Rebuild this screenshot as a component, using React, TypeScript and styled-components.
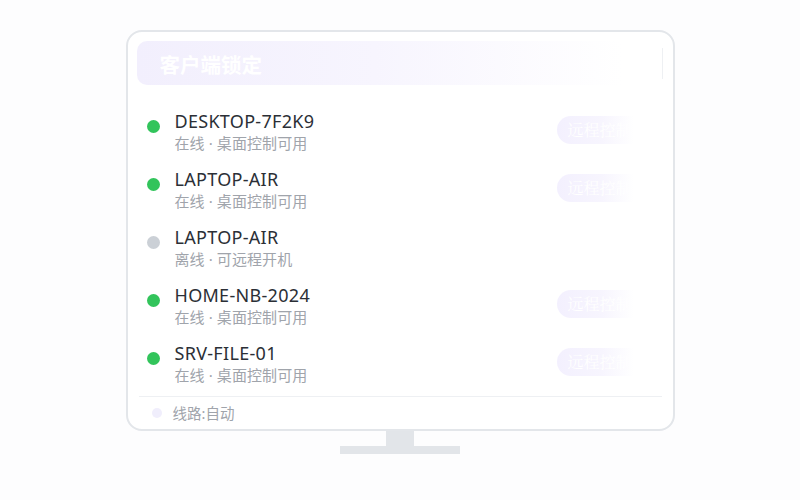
import React from "react";
import styled, { createGlobalStyle } from "styled-components";

const Global = createGlobalStyle`
  html, body { margin: 0; padding: 0; background: #fdfdfe; }
  body { font-family: "Noto Sans", "Noto Sans CJK SC", sans-serif; }
`;

const Page = styled.div`
  width: 800px;
  height: 500px;
  display: flex;
  flex-direction: column;
  align-items: center;
  padding-top: 30px;
  box-sizing: border-box;
`;

const Frame = styled.div`
  width: 549px;
  height: 401px;
  box-sizing: border-box;
  border: 2px solid #e3e6ea;
  border-radius: 16px;
  background: #ffffff;
  padding: 9px 9px 0 9px;
  display: flex;
  flex-direction: column;
`;

const Header = styled.div`
  position: relative;
  height: 45px;
  border-radius: 10px;
  background: linear-gradient(90deg, #f2effd 0%, #f7f5fe 45%, #ffffff 92%);
  display: flex;
  align-items: center;
  padding-left: 23px;
  &::after {
    content: "";
    position: absolute;
    right: 1px;
    top: 7px;
    bottom: 6px;
    width: 1px;
    background: #eef0f3;
  }
`;

const Title = styled.div`
  font-family: "Noto Sans CJK SC", sans-serif;
  color: #ffffff;
  font-size: 20.5px;
  font-weight: 700;
  margin-top: 2px;
`;

const List = styled.div`
  margin-top: 13px;
  display: flex;
  flex-direction: column;
`;

const Row = styled.div`
  height: 58px;
  box-sizing: border-box;
  display: flex;
  align-items: flex-start;
  padding-left: 10px;
  padding-top: 12px;
`;

const Dot = styled.span<{ $online: boolean }>`
  width: 13px;
  height: 13px;
  margin-top: 10px;
  border-radius: 50%;
  background: ${(p) => (p.$online ? "#32c45b" : "#cbd0d6")};
  flex: none;
`;

const Info = styled.div`
  margin-left: 15px;
  display: flex;
  flex-direction: column;
  flex: 1;
`;

const Name = styled.div`
  font-size: 18px;
  line-height: 22px;
  color: #2b2f36;
  letter-spacing: 0.3px;
`;

const Sub = styled.div`
  font-size: 15px;
  line-height: 20px;
  margin-top: 1px;
  color: #a0a4ab;
  letter-spacing: 0.1px;
`;

const RemoteBtn = styled.button`
  margin-right: 17px;
  margin-top: 6px;
  width: 90px;
  height: 28px;
  border: none;
  border-radius: 14px;
  background: linear-gradient(90deg, #f3f0fe 0%, #f7f5fe 50%, rgba(255,255,255,0) 85%);
  color: #ffffff;
  font-family: "Noto Serif CJK SC", serif;
  font-size: 16px;
  text-align: left;
  padding: 0 0 0 11px;
  white-space: nowrap;
  overflow: hidden;
`;

const Divider = styled.div`
  margin-top: 8px;
  height: 1px;
  background: #eef0f3;
  margin-left: 2px;
  margin-right: 2px;
`;

const Footer = styled.div`
  display: flex;
  align-items: center;
  height: 33px;
  padding-left: 15px;
`;

const FootDot = styled.span`
  width: 10px;
  height: 10px;
  border-radius: 50%;
  background: #f0eefc;
`;

const FootText = styled.span`
  margin-left: 11px;
  font-size: 14.5px;
  color: #a0a4ab;
`;

const Neck = styled.div`
  width: 28px;
  height: 15px;
  background: #e2e5e9;
`;

const Base = styled.div`
  width: 120px;
  height: 8px;
  background: #e2e5e9;
`;

const devices = [
  { name: "DESKTOP-7F2K9", online: true, sub: "在线 · 桌面控制可用" },
  { name: "LAPTOP-AIR", online: true, sub: "在线 · 桌面控制可用" },
  { name: "LAPTOP-AIR", online: false, sub: "离线 · 可远程开机" },
  { name: "HOME-NB-2024", online: true, sub: "在线 · 桌面控制可用" },
  { name: "SRV-FILE-01", online: true, sub: "在线 · 桌面控制可用" },
];

export default function App() {
  return (
    <>
      <Global />
      <Page>
        <Frame>
          <Header>
            <Title>客户端锁定</Title>
          </Header>
          <List>
            {devices.map((d, i) => (
              <Row key={i}>
                <Dot $online={d.online} />
                <Info>
                  <Name>{d.name}</Name>
                  <Sub>{d.sub}</Sub>
                </Info>
                {d.online && <RemoteBtn>远程控制</RemoteBtn>}
              </Row>
            ))}
          </List>
          <Divider />
          <Footer>
            <FootDot />
            <FootText>线路:自动</FootText>
          </Footer>
        </Frame>
        <Neck />
        <Base />
      </Page>
    </>
  );
}
